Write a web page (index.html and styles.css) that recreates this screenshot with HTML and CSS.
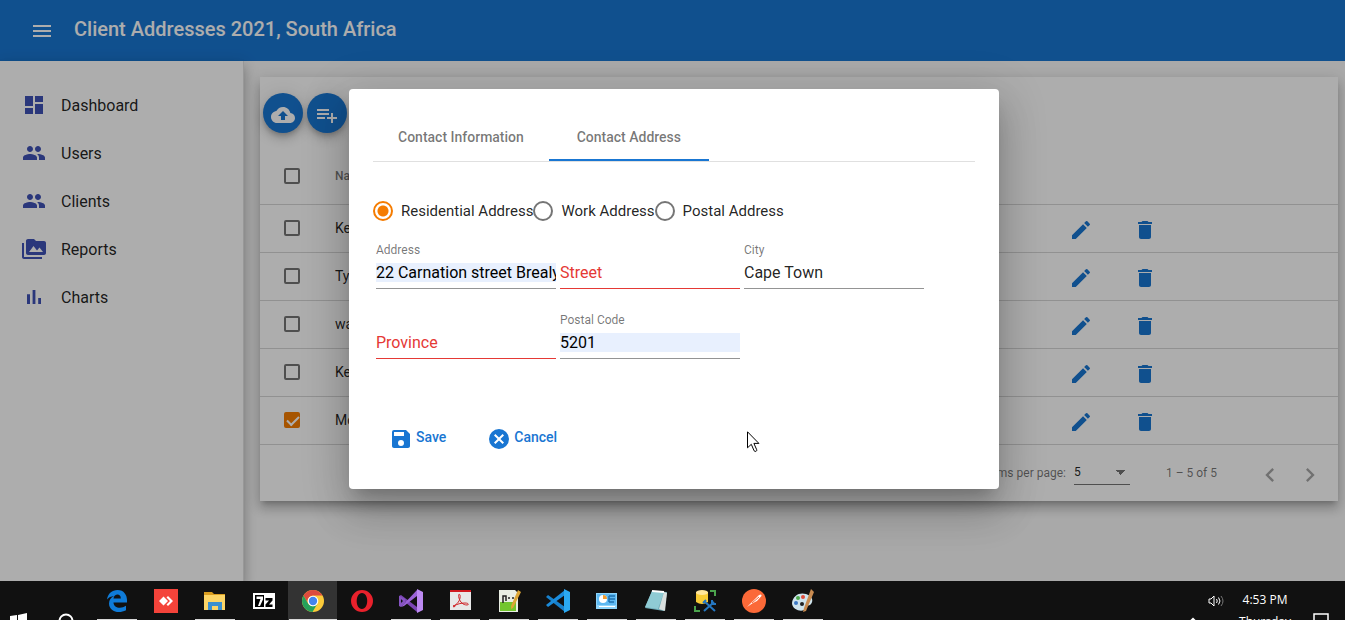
FILE: index.html
```html
<!DOCTYPE html>
<html lang="en">
<head>
<meta charset="utf-8">
<meta name="viewport" content="width=device-width, initial-scale=1">
<title>Client Addresses 2021, South Africa</title>
<link rel="stylesheet" href="styles.css">
</head>
<body>
<svg class="sprite" aria-hidden="true">
  <symbol id="people" viewBox="0 0 24 24"><path d="M16 11c1.660 0 2.990-1.340 2.990-3S17.660 5 16 5s-3 1.340-3 3 1.340 3 3 3zm-8 0c1.660 0 2.990-1.340 2.990-3S9.660 5 8 5 5 6.340 5 8s1.340 3 3 3zm0 2c-2.330 0-7 1.170-7 3.500V19h14v-2.500C15 14.170 10.330 13 8 13zm8 0c-.290 0-.620.020-.970.050 1.160.840 1.970 1.970 1.970 3.450V19h6v-2.500c0-2.330-4.670-3.500-7-3.500z"/></symbol>
  <symbol id="edit" viewBox="0 0 24 24"><path d="M3 17.250V21h3.750L17.810 9.940l-3.750-3.750L3 17.250zM20.710 7.040a1 1 0 0 0 0-1.410l-2.340-2.340a1 1 0 0 0-1.410 0l-1.830 1.830 3.750 3.750 1.830-1.830z"/></symbol>
  <symbol id="delete" viewBox="0 0 24 24"><path d="M6 19c0 1.100.9 2 2 2h8c1.100 0 2-.9 2-2V7H6v12zM19 4h-3.500l-1-1h-5l-1 1H5v2h14V4z"/></symbol>
</svg>

<div class="app">
  <header class="toolbar">
    <button class="menu-button" aria-label="Toggle menu"><svg class="icon" viewBox="0 0 24 24"><path d="M3 18h18v-2H3v2zm0-5h18v-2H3v2zm0-7v2h18V6H3z"/></svg></button>
    <h1 class="title">Client Addresses 2021, South Africa</h1>
  </header>

  <div class="body">
    <nav class="sidenav">
      <a class="nav-item" href="#"><svg class="icon" viewBox="0 0 24 24"><path d="M3 13h8V3H3v10zm0 8h8v-6H3v6zm10 0h8V11h-8v10zm0-18v6h8V3h-8z"/></svg>Dashboard</a>
      <a class="nav-item" href="#"><svg class="icon"><use href="#people"/></svg>Users</a>
      <a class="nav-item" href="#"><svg class="icon"><use href="#people"/></svg>Clients</a>
      <a class="nav-item" href="#"><svg class="icon" viewBox="0 0 24 24"><path d="M2 6H0v14c0 1.100.9 2 2 2h18v-2H2V6zm20-2h-8l-2-2H6c-1.100 0-1.990.9-1.990 2L4 16c0 1.100.9 2 2 2h16c1.100 0 2-.9 2-2V6c0-1.100-.9-2-2-2zM7 15l4.500-6 3.500 4.510 2.500-3.010L21 15H7z"/></svg>Reports</a>
      <a class="nav-item" href="#"><svg class="icon" viewBox="0 0 24 24"><path d="M5 9.200h3V19H5zM10.600 5h2.800v14h-2.800zm5.600 8H19v6h-2.800z"/></svg>Charts</a>
    </nav>

    <main class="content">
      <section class="card">
        <div class="actions">
          <button class="fab" aria-label="Upload"><svg class="icon" viewBox="0 0 24 24"><path d="M19.350 10.040C18.670 6.590 15.640 4 12 4 9.110 4 6.600 5.640 5.350 8.040 2.340 8.360 0 10.910 0 14c0 3.310 2.690 6 6 6h13c2.760 0 5-2.240 5-5 0-2.640-2.050-4.780-4.650-4.960zM14 13v4h-4v-4H7l5-5 5 5h-3z"/></svg></button>
          <button class="fab" aria-label="Add client"><svg class="icon" viewBox="0 0 24 24"><path d="M14 10H2v2h12v-2zm0-4H2v2h12V6zm4 8v-4h-2v4h-4v2h4v4h2v-4h4v-2h-4zM2 16h8v-2H2v2z"/></svg></button>
        </div>
        <table class="clients">
          <thead>
            <tr><th class="col-check"><input class="check" type="checkbox" aria-label="Select all"></th><th class="col-name">Name</th><th class="col-edit"></th><th class="col-delete"></th></tr>
          </thead>
          <tbody>
            <tr><td class="col-check"><input class="check" type="checkbox" aria-label="Select row 1"></td><td>Ke</td><td><button class="row-button" aria-label="Edit"><svg class="icon"><use href="#edit"/></svg></button></td><td><button class="row-button" aria-label="Delete"><svg class="icon"><use href="#delete"/></svg></button></td></tr>
            <tr><td class="col-check"><input class="check" type="checkbox" aria-label="Select row 2"></td><td>Ty</td><td><button class="row-button" aria-label="Edit"><svg class="icon"><use href="#edit"/></svg></button></td><td><button class="row-button" aria-label="Delete"><svg class="icon"><use href="#delete"/></svg></button></td></tr>
            <tr><td class="col-check"><input class="check" type="checkbox" aria-label="Select row 3"></td><td>wa</td><td><button class="row-button" aria-label="Edit"><svg class="icon"><use href="#edit"/></svg></button></td><td><button class="row-button" aria-label="Delete"><svg class="icon"><use href="#delete"/></svg></button></td></tr>
            <tr><td class="col-check"><input class="check" type="checkbox" aria-label="Select row 4"></td><td>Ke</td><td><button class="row-button" aria-label="Edit"><svg class="icon"><use href="#edit"/></svg></button></td><td><button class="row-button" aria-label="Delete"><svg class="icon"><use href="#delete"/></svg></button></td></tr>
            <tr><td class="col-check"><input class="check" type="checkbox" aria-label="Select row 5" checked></td><td>Mo</td><td><button class="row-button" aria-label="Edit"><svg class="icon"><use href="#edit"/></svg></button></td><td><button class="row-button" aria-label="Delete"><svg class="icon"><use href="#delete"/></svg></button></td></tr>
          </tbody>
        </table>
        <footer class="paginator">
          <label for="page-size">Items per page:</label>
          <select id="page-size" class="page-size"><option>5</option></select>
          <span class="range">1 – 5 of 5</span>
          <button class="page-button" aria-label="Previous page"><svg class="icon" viewBox="0 0 24 24"><path d="M15.410 7.410 14 6l-6 6 6 6 1.410-1.410L10.830 12z"/></svg></button>
          <button class="page-button" aria-label="Next page"><svg class="icon" viewBox="0 0 24 24"><path d="M10 6 8.590 7.410 13.170 12l-4.580 4.590L10 18l6-6z"/></svg></button>
        </footer>
      </section>
    </main>
  </div>

  <div class="backdrop">
    <form class="dialog" role="dialog" aria-label="Contact">
      <div class="tabs" role="tablist">
        <button type="button" class="tab" role="tab">Contact Information</button>
        <button type="button" class="tab tab-active" role="tab" aria-selected="true">Contact Address</button>
      </div>
      <div class="radios">
        <label class="radio"><input type="radio" name="kind" checked>Residential Address</label>
        <label class="radio"><input type="radio" name="kind">Work Address</label>
        <label class="radio"><input type="radio" name="kind">Postal Address</label>
      </div>
      <div class="fields">
        <div class="field"><label for="address">Address</label><input id="address" class="filled" value="22 Carnation street Brealyn"></div>
        <div class="field field-error"><label for="street"></label><input id="street" placeholder="Street"></div>
        <div class="field"><label for="city">City</label><input id="city" value="Cape Town"></div>
        <div class="field field-error"><label for="province"></label><input id="province" placeholder="Province"></div>
        <div class="field"><label for="postal">Postal Code</label><input id="postal" class="filled" value="5201"></div>
      </div>
      <div class="dialog-actions">
        <button type="button" class="text-button"><svg class="icon" viewBox="0 0 24 24"><path d="M17 3H5a2 2 0 0 0-2 2v14c0 1.100.9 2 2 2h14c1.100 0 2-.9 2-2V7l-4-4zm-5 16a3 3 0 1 1 0-6 3 3 0 0 1 0 6zm3-10H5V5h10v4z"/></svg><span>Save</span></button>
        <button type="button" class="text-button"><svg class="icon" viewBox="0 0 24 24"><path d="M12 2a10 10 0 1 0 0 20 10 10 0 0 0 0-20zm5 13.590L15.590 17 12 13.410 8.410 17 7 15.590 10.590 12 7 8.410 8.410 7 12 10.590 15.590 7 17 8.410 13.410 12 17 15.590z"/></svg><span>Cancel</span></button>
      </div>
    </form>
  </div>
  <svg class="cursor" viewBox="0 0 13 22"><path d="M.5.8v16l3.800-3.500 2.800 6.500q1 1.200 2.200.3.700-.6.400-1.400l-2.800-6.300h5z" fill="#fff" stroke="#000"/></svg>
</div>

<footer class="taskbar">
  <button class="task low" aria-label="Start"><svg width="18" height="18" viewBox="0 0 18 18"><path d="M1 3l7-1v7H1zM9 2l9-2v9H9zM1 10h7v6l-7-1zM9 10h9v8l-9-1z" fill="#fff"/></svg></button>
  <button class="task low" aria-label="Search"><svg width="18" height="18" viewBox="0 0 18 18"><circle cx="9" cy="8" r="6.500" fill="none" stroke="#fff" stroke-width="2"/></svg></button>
  <button class="task open" aria-label="Edge"><svg viewBox="0 0 24 24"><path d="M2 10.500C3 4.500 7 1 12.500 1 19 1 22 6 22 11v2.500H8.500c.2 6 8 6.500 12.500 3.300v4.500C13 25.500 4 22 4 14.500c0-3.500 2-6 5-7.500-3 .3-5.500 1.500-7 3.500zm6.500-1h7.300C16 4 9 4.500 8.500 9.500z" fill="#0f7bd8"/></svg></button>
  <button class="task" aria-label="AnyDesk"><svg viewBox="0 0 24 24"><path d="M0 0h24v24H0z" fill="#f4433a"/><path d="M5 12l4.500-4.500L14 12l-4.500 4.500zM12.500 8.500L14 7l5 5-5 5-1.500-1.500L16 12z" fill="#fff"/></svg></button>
  <button class="task open" aria-label="File Explorer"><svg viewBox="0 0 24 24"><path d="M1 3h8l2 2h11v4H1z" fill="#d99d20"/><path d="M1 6h21v15H1z" fill="#fcd567"/><path d="M5 21v-8h14v8h-4v-4H9v4z" fill="#3a8fd0"/></svg></button>
  <button class="task" aria-label="7-Zip"><svg viewBox="0 0 24 24"><path d="M1 4h22v16H1z" fill="#fff"/><path d="M3 6h9v12H3z" fill="#000"/><path d="M4.500 7.500H11v3L8 17H6l2.500-7h-4z" fill="#fff"/><path d="M13.500 9h7v2.500L17 15.500h3.500V18h-7v-2.500l3.500-4h-3.500z" fill="#000"/></svg></button>
  <button class="task open current" aria-label="Chrome"><svg viewBox="0 0 24 24"><circle cx="12" cy="12" r="11" fill="#fccb3a"/><path d="M2.500 6.500A11 11 0 0 1 21.500 6.500H12A5.500 5.500 0 0 0 7.200 14.800z" fill="#dd4b3e"/><path d="M2.500 6.500A11 11 0 0 0 11.500 23l5-8.500A5.500 5.500 0 0 1 7.200 14.700z" fill="#24a15b"/><circle cx="12" cy="12" r="5.300" fill="#fff"/><circle cx="12" cy="12" r="4.200" fill="#4484ee"/></svg></button>
  <button class="task" aria-label="Opera"><svg viewBox="0 0 24 24"><path fill-rule="evenodd" d="M12 1a11 11 0 1 0 0 22 11 11 0 0 0 0-22zm0 3c7 0 7 16 0 16S5 4 12 4z" fill="#e9212c"/></svg></button>
  <button class="task open" aria-label="Visual Studio"><svg viewBox="0 0 24 24"><path d="M0 7l2-1 16 12v5L0 8z" fill="#7b45b5"/><path d="M0 7v10l2 1 4-4V10zm2 3l2 2-2 2z" fill="#8654c2" fill-rule="evenodd"/><path d="M2 18L18 1v6L5 17z" fill="#9b63d8"/><path d="M18 0l6 3v18l-6 3z" fill="#bd8af2"/></svg></button>
  <button class="task open" aria-label="PDF reader"><svg viewBox="0 0 24 24"><path d="M2 1h21v20H2z" fill="#e8e8e8"/><path d="M2 1h21v2H2z" fill="#d11a20"/><path d="M5 17c4-1 8-6 7-11-1-2-2 0-1 3 1 4 4 7 8 7 2 0 2-2-2-2-4 0-8 1-11 3-1 1 0 2 1 0z" fill="none" stroke="#cf2529"/></svg></button>
  <button class="task open" aria-label="Notepad++"><svg viewBox="0 0 24 24"><path d="M2 1h16l3 3v19H2z" fill="#e9eee4"/><path d="M3 13h16v9H3z" fill="#72c52e"/><path d="M6 14V7h3v5M11 9h2M15 9h2" stroke="#222" stroke-width="1.500" fill="none"/><path d="M21 1l3 2-8 16-2 1v-3z" fill="#dba536"/></svg></button>
  <button class="task open" aria-label="Visual Studio Code"><svg viewBox="0 0 24 24"><path d="M0 8l2-2 17 12v5z" fill="#1780cc"/><path d="M0 16l2 2L19 6V1z" fill="#1b8cdc"/><path d="M18 0l6 3v18l-6 3z" fill="#2ba9f2"/></svg></button>
  <button class="task open" aria-label="Control Panel"><svg viewBox="0 0 24 24"><path d="M1 4h21v16H1z" fill="#8dd4fb"/><path d="M2 5h19v11H2z" fill="#5db8f1"/><circle cx="8" cy="10" r="4" fill="#fff"/><path d="M8 10V6a4 4 0 0 1 4 4z" fill="#f19d32"/><path d="M14 7h6M14 10h6M14 13h5M14 7v6" fill="none" stroke="#1e70ae" stroke-width="1.500"/><path d="M4 17h16v1H4z" fill="#fff"/></svg></button>
  <button class="task open" aria-label="Notepad"><svg viewBox="0 0 24 24"><path d="M8 2l15 1-3 19-19-3z" fill="#6eabb7"/><path d="M8 2l12 1-6 17-13-2z" fill="#8fcbd4"/><path d="M20 3l3 1-2 18-6-2z" fill="#d9dfde"/><path d="M8 2l12 1" stroke="#fff" stroke-width="2"/></svg></button>
  <button class="task open" aria-label="SQL Server Management Studio"><svg viewBox="0 0 24 24"><path d="M3 3v10q6 4 12 0V3z" fill="#f8cb35"/><ellipse cx="9" cy="3.500" rx="6" ry="2.500" fill="#ffe59b"/><path d="M17 2h5v5M2 17v5h5" stroke="#4ba44d" stroke-width="2" fill="none"/><path d="M11 12l11 10M21 13L11 22" stroke="#2476c0" stroke-width="2"/><path d="M19 11v4h4M10 14l3-3" fill="none" stroke="#2476c0" stroke-width="2"/></svg></button>
  <button class="task open" aria-label="Postman"><svg viewBox="0 0 24 24"><circle cx="12" cy="12" r="12" fill="#fb6938"/><path d="M5 18l8-8 4-4q3-1.500 2.500 1L15 12l-4 2z" fill="#fff"/><path d="M10 14l7-6" stroke="#fb6938"/></svg></button>
  <button class="task open" aria-label="Paint"><svg viewBox="0 0 24 24"><path d="M1 14C2 6 9 3 15 5c7 2 8 8 4 11-2 1-5 0-5 3 0 5-13 3-13-5z" fill="#cfe4ed"/><circle cx="5" cy="14" r="2" fill="#3b78c5"/><circle cx="7" cy="9" r="2" fill="#4da84d"/><circle cx="12" cy="8" r="2" fill="#df4c3b"/><circle cx="11" cy="15" r="2" fill="#222"/><path d="M20 0l3 3-8 19-3 1 1-4z" fill="#c98b50"/></svg></button>
  <div class="tray">
    <svg class="caret" width="10" height="6" viewBox="0 0 10 6"><path d="M1 5.500l4-4 4 4" fill="none" stroke="#fff" stroke-width="1.500"/></svg>
    <svg class="speaker" width="17" height="14" viewBox="0 0 17 14"><path d="M1 5h2l3-3v10L3 9H1z" fill="none" stroke="#fff"/><path d="M8.500 5q1.500 2 0 4M10.500 3.500q3 3.500 0 7" fill="none" stroke="#fff"/><path d="M13 2q4 5 0 10" fill="none" stroke="#777"/></svg>
    <div class="clock"><span>4:53 PM</span><span>Thursday</span></div>
    <svg class="notice" width="16" height="14" viewBox="0 0 16 14"><path d="M1 1h14v12H1z" fill="none" stroke="#fff" stroke-width="1.500"/></svg>
  </div>
</footer>
</body>
</html>
```
FILE: styles.css
```css
* { box-sizing: border-box; }

body {
  margin: 0;
  height: 100vh;
  display: flex;
  flex-direction: column;
  overflow: hidden;
  font-family: Roboto, "Liberation Sans", sans-serif;
  font-size: 14px;
  color: rgba(0, 0, 0, .87);
}

button, input, select { font: inherit; color: inherit; }
button { border: 0; padding: 0; background: none; }
svg { display: block; flex: none; }

.sprite { position: absolute; width: 0; height: 0; }
.icon { width: 24px; height: 24px; fill: currentColor; }

.app {
  flex: 1;
  min-height: 0;
  position: relative;
  display: flex;
  flex-direction: column;
  overflow: hidden;
}

.toolbar {
  display: flex;
  align-items: center;
  gap: 20px;
  height: 61px;
  padding: 0 30px;
  background: #1976d2;
  color: #fff;
}
.title { margin: 0 0 4px; font-size: 20px; font-weight: 500; line-height: 24px; }

.body { flex: 1; display: flex; min-height: 0; background: #fafafa; }

.sidenav {
  width: 244px;
  padding-top: 20px;
  background: #fff;
  border-right: 1px solid #e0e0e0;
  box-shadow: 0 5px 5px -3px rgba(0, 0, 0, .2), 0 8px 10px 1px rgba(0, 0, 0, .14), 0 3px 14px 2px rgba(0, 0, 0, .12);
}
.nav-item {
  display: flex;
  align-items: center;
  gap: 15px;
  height: 48px;
  padding-left: 22px;
  font-size: 16px;
  color: rgba(0, 0, 0, .87);
  text-decoration: none;
}
.nav-item .icon { color: #3f51b5; }

.content { flex: 1; padding: 16px 7px 16px 16px; }
.card {
  background: #fff;
  box-shadow: 0 5px 5px -3px rgba(0, 0, 0, .2), 0 8px 10px 1px rgba(0, 0, 0, .14), 0 3px 14px 2px rgba(0, 0, 0, .12);
}
.actions { display: flex; gap: 4px; padding: 16px 3px 15px; }
.fab {
  display: grid;
  place-items: center;
  width: 40px;
  height: 40px;
  padding-top: 4px;
  border-radius: 50%;
  background: #1976d2;
  color: #fff;
  box-shadow: 0 3px 5px -1px rgba(0, 0, 0, .2), 0 6px 10px rgba(0, 0, 0, .14), 0 1px 18px rgba(0, 0, 0, .12);
}

.clients { width: 100%; table-layout: fixed; border-collapse: collapse; }
.clients tr { height: 48px; }
.clients thead tr { height: 56px; }
.clients th, .clients td { padding: 0; text-align: left; border-bottom: 1px solid rgba(0, 0, 0, .16); }
.clients th { font-size: 12px; font-weight: 500; color: rgba(0, 0, 0, .54); }
.clients .col-check { width: 75px; padding-left: 24px; }
.col-edit { width: 64px; }
.col-delete { width: 205px; }
.check {
  appearance: none;
  display: block;
  width: 16px;
  height: 16px;
  margin: 0;
  border: 2px solid rgba(0, 0, 0, .54);
  border-radius: 2px;
}
.check:checked {
  border-color: #f57c00;
  background: #f57c00;
}
.check:checked::before {
  content: "";
  display: block;
  width: 10px;
  height: 5px;
  margin: 2px 1px;
  border: solid #fff;
  border-width: 0 0 2px 2px;
  transform: rotate(-45deg);
}
.row-button { display: block; padding-top: 3px; color: #1976d2; }

.paginator {
  display: flex;
  align-items: center;
  justify-content: flex-end;
  height: 56px;
  padding-right: 8px;
  font-size: 12px;
  color: rgba(0, 0, 0, .54);
}
.page-size {
  appearance: none;
  width: 56px;
  height: 24px;
  margin: 0 36px 0 8px;
  border: 0;
  border-bottom: 1px solid rgba(0, 0, 0, .54);
  border-radius: 0;
  color: rgba(0, 0, 0, .87);
  background: conic-gradient(from -45deg at 50% 100%, rgba(0, 0, 0, .54) 90deg, transparent 0) right 3px center / 12px 5px no-repeat;
  background: linear-gradient(to bottom left, rgba(0, 0, 0, .54) 50%, transparent 50%) right 9px center / 5px 5px no-repeat, linear-gradient(to bottom right, rgba(0, 0, 0, .54) 50%, transparent 50%) right 4px center / 5px 5px no-repeat;
}
.range { margin-right: 33px; }
.page-button { width: 40px; height: 40px; padding: 8px 6px 4px; color: rgba(0, 0, 0, .35); }
.page-button .icon { width: 28px; height: 28px; }

.backdrop {
  position: absolute;
  inset: 0;
  display: flex;
  align-items: flex-start;
  justify-content: center;
  padding: 89px 0 0 3px;
  background: rgba(0, 0, 0, .32);
}
.dialog {
  width: 650px;
  max-width: 80vw;
  min-height: 400px;
  padding: 24px;
  border-radius: 4px;
  background: #fff;
  box-shadow: 0 11px 15px -7px rgba(0, 0, 0, .2), 0 24px 38px 3px rgba(0, 0, 0, .14), 0 9px 46px 8px rgba(0, 0, 0, .12);
}

.tabs { display: flex; border-bottom: 1px solid rgba(0, 0, 0, .12); }
.tab {
  height: 48px;
  min-width: 160px;
  padding: 2px 25px 0;
  border-bottom: 2px solid transparent;
  font-weight: 500;
  color: rgba(0, 0, 0, .54);
}
.tab-active { border-color: #1976d2; }

.radios { display: flex; padding: 39px 0 20px; font-size: 15px; line-height: 20px; }
.radio { display: flex; align-items: center; gap: 8px; }
.radio input {
  appearance: none;
  width: 20px;
  height: 20px;
  margin: 0;
  border: 2px solid rgba(0, 0, 0, .54);
  border-radius: 50%;
}
.radio input:checked {
  border-color: #f57c00;
  background: radial-gradient(circle, #f57c00 5px, transparent 6px);
}

.fields { display: flex; flex-wrap: wrap; gap: 22px 4px; padding-left: 3px; }
.field {
  display: flex;
  flex-direction: column;
  width: 180px;
  height: 48px;
  padding-bottom: 6px;
  border-bottom: 1px solid rgba(0, 0, 0, .42);
}
.field label { height: 22px; padding-top: 1px; font-size: 12px; line-height: 16px; color: rgba(0, 0, 0, .54); }
.field input {
  width: 100%;
  height: 19px;
  padding: 0;
  border: 0;
  background: none;
  font-size: 16px;
}
.field .filled { background: #e8f0fe; color: #000; }
.field.field-error { border-bottom-color: #e53935; }
.field-error input::placeholder { color: #e53935; opacity: 1; }

.dialog-actions { display: flex; gap: 41px; padding: 68px 16px 0; }
.text-button { display: flex; align-items: center; gap: 3px; font-weight: 500; color: #1976d2; }
.text-button span { padding-bottom: 4px; }

.cursor { position: absolute; left: 747px; top: 431px; width: 13px; height: 22px; }

.taskbar {
  display: flex;
  height: 39px;
  overflow: hidden;
  background: #111;
  color: #fff;
}
.task {
  flex: none;
  display: flex;
  flex-direction: column;
  align-items: center;
  width: 49px;
  height: 39px;
  padding-top: 8px;
}
.task svg { width: 24px; height: 24px; }
.task.low { width: 36px; margin-right: 12px; padding-top: 32px; }
.task.low + .task.low { margin-right: 8px; }
.task.low svg { width: 18px; height: 18px; }
.task.open::after { content: ""; width: 40px; height: 1px; margin-top: 6px; background: #d8d8d8; }
.task.current { background: #333; }
.task.current::after { width: 48px; }

.tray {
  display: flex;
  align-items: flex-start;
  margin-left: auto;
  padding-right: 16px;
  font-family: "Open Sans", "Noto Sans", sans-serif;
  font-size: 12px;
  line-height: 22px;
}
.caret { margin-top: 36px; }
.speaker { margin: 13px 14px 0 10px; }
.clock { display: flex; flex-direction: column; align-items: center; padding-top: 8px; }
.notice { margin: 32px 0 0 22px; }
```
